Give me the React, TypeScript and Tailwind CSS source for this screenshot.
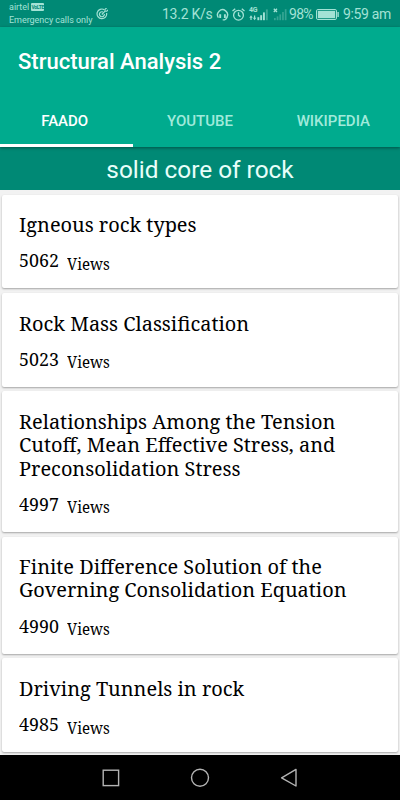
import React from 'react';

const topics = [
  { lines: ['Igneous rock types'], views: 5062 },
  { lines: ['Rock Mass Classification'], views: 5023 },
  {
    lines: ['Relationships Among the Tension', 'Cutoff, Mean Effective Stress, and', 'Preconsolidation Stress'],
    views: 4997,
  },
  { lines: ['Finite Difference Solution of the', 'Governing Consolidation Equation'], views: 4990 },
  { lines: ['Driving Tunnels in rock'], views: 4985 },
];

const tabs = [
  { label: 'FAADO', active: true },
  { label: 'YOUTUBE', active: false },
  { label: 'WIKIPEDIA', active: false },
];

const TargetIcon = () => (
  <svg width="12" height="12" viewBox="0 0 12 12" fill="none" stroke="currentColor" strokeWidth="1.2">
    <path d="M8.3 1.7A4.8 4.8 0 1 0 10.6 5" />
    <path d="M7 4a2.5 2.5 0 1 0 1.4 2" />
    <path d="M5.8 6.5 9 3.2M9 3.2V1.3L10.6 0M9 3.2h1.8L12 1.8" strokeWidth="1.1" />
  </svg>
);

const HeadsetIcon = () => (
  <svg width="13" height="13" viewBox="0 0 12 13" fill="none" stroke="currentColor" strokeWidth="1.4">
    <path d="M1.9 9.6A5 5 0 1 1 10.4 9.2" />
    <path d="M3.7 6.3v3.8M8.4 6.3v3.8" strokeWidth="1.9" />
    <path d="M10.6 8.8c-.4 1.9-1.8 3.1-4.4 3.1" />
  </svg>
);

const AlarmIcon = () => (
  <svg width="13" height="13" viewBox="0 0 13 13" fill="none" stroke="currentColor" strokeWidth="1.3">
    <circle cx="6.5" cy="7.2" r="4.9" />
    <path d="M6.5 4.2v3.2l2 1.2" />
    <path d="M.5 3.1 3.2.8M12.5 3.1 9.8.8" />
  </svg>
);

const MobileSignal = () => (
  <div className="relative w-[20px] h-[13px]">
    <span className="absolute left-0 -top-px text-[7px] leading-[7px] font-bold tracking-[-0.3px]">4G</span>
    <svg width="20" height="13" viewBox="0 0 20 13" fill="currentColor">
      <path d="M2 7.3 3.7 9.8H2.6v2.2H1.4V9.8H.3zM5.6 12.3 3.9 9.8H5V7.6h1.2v2.2h1.1z" />
      <rect x="8.4" y="9.2" width="1.9" height="3" />
      <rect x="11.2" y="7.2" width="1.9" height="5" />
      <rect x="14" y="4.4" width="1.9" height="7.8" />
      <rect x="16.9" y="1.4" width="1.9" height="10.8" opacity="0.35" />
    </svg>
  </div>
);

const NoSignal = () => (
  <svg width="14" height="13" viewBox="0 0 14 13" fill="currentColor">
    <path d="M.8.8l3.2 3.2M4 .8.8 4" stroke="currentColor" strokeWidth="1.3" />
    <g opacity="0.32">
      <rect x="1" y="10" width="1.7" height="2.2" />
      <rect x="3.7" y="8.4" width="1.7" height="3.8" />
      <rect x="6.4" y="6.4" width="1.7" height="5.8" />
      <rect x="9.1" y="4" width="1.7" height="8.2" />
      <rect x="11.8" y="1.2" width="1.7" height="11" />
    </g>
  </svg>
);

const BatteryIcon = () => (
  <svg width="23" height="11" viewBox="0 0 23 11" className="shrink-0">
    <rect x="0.5" y="0.5" width="20" height="10" rx="1.4" fill="none" stroke="currentColor" />
    <rect x="1.8" y="1.8" width="17.4" height="7.4" fill="currentColor" />
    <rect x="21.4" y="3" width="1.4" height="5" fill="currentColor" />
  </svg>
);

const StatusBar = () => (
  <div className="h-[27px] shrink-0 bg-[#008975] text-[#a3e2d5] flex items-center">
    <div className="pl-[9px] w-[162px] flex items-center gap-[3px]">
      <div className="w-[84px] text-[9px] leading-[13px] whitespace-nowrap">
        <div className="flex items-center gap-[2px]">
          airtel
          <span className="bg-[#a3e2d5] text-[#008975] text-[5px] leading-[8px] font-bold rounded-[1px] w-[13px] text-center tracking-[-0.3px]">VoLTE</span>
        </div>
        <div className="tracking-[-0.04px]">Emergency calls only</div>
      </div>
      <TargetIcon />
    </div>
    <div className="flex items-center pt-px">
      <span className="w-[54px] text-[14px] tracking-[-0.25px] whitespace-nowrap">13.2 K/s</span>
      <HeadsetIcon />
      <div className="w-[3px]" />
      <AlarmIcon />
      <div className="w-[4px]" />
      <MobileSignal />
      <div className="w-[4px]" />
      <NoSignal />
      <span className="w-[29px] pl-[2px] text-[14px] tracking-[-0.7px]">98%</span>
      <BatteryIcon />
      <span className="pl-[4px] text-[14px] tracking-[-0.35px] whitespace-nowrap">9:59 am</span>
    </div>
  </div>
);

const TopicCard = ({ lines, views }: { lines: string[]; views: number }) => (
  <article className="shrink-0 bg-white rounded-[2px] shadow-[0_1px_2px_rgba(0,0,0,0.32)] px-[17px] pt-[18.6px] pb-[13.9px] text-black font-['Noto_Serif',serif]">
    <h2 className="text-[20.8px] leading-[23.3px] origin-left scale-x-[0.958]">
      {lines.map((line) => (
        <span key={line} className="block whitespace-nowrap">{line}</span>
      ))}
    </h2>
    <div className="mt-[12px] h-[26.2px] flex items-start gap-[8.5px]">
      <span className="w-[39px] text-[18.6px] leading-[24px] origin-left scale-x-[0.96]">{views}</span>
      <span className="text-[16px] leading-[24px] pt-[3.4px] origin-left scale-x-[0.94]">Views</span>
    </div>
  </article>
);

const NavBar = () => (
  <footer className="h-[45px] shrink-0 bg-black text-[#b4b4b4] flex justify-center items-center gap-[70px]">
    <svg width="18" height="18" viewBox="0 0 18 18" fill="none" stroke="currentColor" strokeWidth="1.4">
      <rect x="1.2" y="1.2" width="15.4" height="15.4" />
    </svg>
    <svg width="20" height="20" viewBox="0 0 20 20" fill="none" stroke="currentColor" strokeWidth="1.4">
      <circle cx="10" cy="9.8" r="8.5" />
    </svg>
    <svg width="18" height="20" viewBox="0 0 18 20" fill="none" stroke="currentColor" strokeWidth="1.4" strokeLinejoin="round">
      <path d="M16 1.4v16.6L1.6 9.8z" />
    </svg>
  </footer>
);

export default function App() {
  return (
    <div className="w-[400px] h-[800px] flex flex-col overflow-hidden bg-[#f2f2f2] font-[Roboto,sans-serif]">
      <StatusBar />
      <header className="h-[120px] shrink-0 bg-[#00ab8e] text-white flex flex-col relative shadow-[0_1px_3px_rgba(0,0,0,0.4)]">
        <h1 className="px-[18px] h-[67px] leading-[69px] text-[22px] font-medium">Structural Analysis 2</h1>
        <nav className="grid grid-cols-3 flex-1">
          {tabs.map(({ label, active }) => (
            <button
              key={label}
              className={`pt-[4px] text-[15px] font-medium border-b-[3px] ${
                active ? 'text-white border-white pr-[4px]' : 'text-[#a0eadb] border-transparent'
              }`}
            >
              {label}
            </button>
          ))}
        </nav>
      </header>
      <div className="h-[43px] shrink-0 bg-[#008975] text-[#e8fffa] text-center text-[24.4px] leading-[46px]">
        solid core of rock
      </div>
      <main className="flex-1 min-h-0 overflow-hidden px-[2px] pt-[4.5px] flex flex-col gap-[4.5px]">
        {topics.map((topic) => (
          <TopicCard key={topic.views} {...topic} />
        ))}
      </main>
      <NavBar />
    </div>
  );
}
